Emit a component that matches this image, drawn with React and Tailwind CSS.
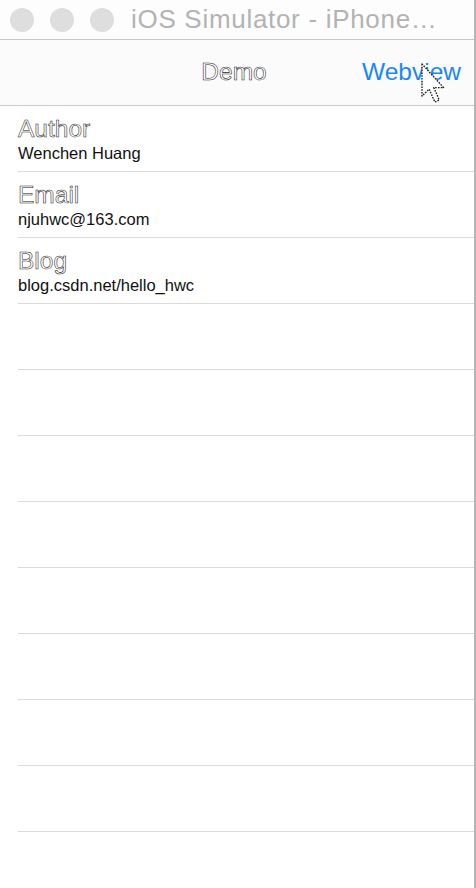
import React from "react";

const rows = [
  { t: "Author", s: "Wenchen Huang" },
  { t: "Email", s: "njuhwc@163.com" },
  { t: "Blog", s: "blog.csdn.net/hello_hwc" },
  {}, {}, {}, {}, {}, {}, {}, {}, {},
];

export default function App() {
  return (
    <div className="w-[476px] h-[888px] flex bg-white overflow-hidden" style={{ fontFamily: '"Liberation Sans", Arial, sans-serif' }}>
      <div className="w-[474px] h-full flex flex-col relative">
        {/* title bar */}
        <div className="h-[40px] shrink-0 flex items-center border-b border-[#c9c9c9] bg-[#fdfdfd]">
          <div className="flex gap-[16px] pl-[10px]">
            <div className="w-[24px] h-[24px] rounded-full bg-[#dedede]" />
            <div className="w-[24px] h-[24px] rounded-full bg-[#dedede]" />
            <div className="w-[24px] h-[24px] rounded-full bg-[#dedede]" />
          </div>
          <div className="ml-[17px] text-[26px] tracking-[0.7px] leading-none text-[#b3b3b3] whitespace-nowrap -mt-[1px]">iOS Simulator - iPhone…</div>
        </div>
        {/* nav bar */}
        <div className="h-[66px] shrink-0 relative flex items-center justify-center border-b border-[#c8c8c8] bg-[#fbfbfb]">
          <div className="text-[24.5px] leading-none text-white [-webkit-text-stroke:0.55px_#222] -mt-[1px] -ml-[6px]">Demo</div>
          <div className="absolute right-[13px] top-[20px] text-[24.5px] leading-none text-[#1a86fa]">Webview</div>
        </div>
        {/* table */}
        <div className="flex flex-col">
          {rows.map((r, i) => (
            <div key={i} className="pl-[18px] shrink-0">
              <div className="h-[66px] border-b border-[#dadada] pt-[9px]">
                {r.t && (
                  <>
                    <div className="text-[24.5px] leading-[28px] text-white [-webkit-text-stroke:0.55px_#222]">{r.t}</div>
                    <div className="text-[16.5px] leading-[20px] text-[#111]">{r.s}</div>
                  </>
                )}
              </div>
            </div>
          ))}
        </div>
        {/* cursor */}
        <svg className="absolute left-[420px] top-[62px]" width="28" height="44" viewBox="0 0 14 22">
          <path d="M1 1 L1 17 L4.6 13.6 L7.4 20 L9.6 19 L6.9 12.8 L11.8 12.8 Z" fill="#fff" stroke="#222" strokeWidth="0.7" strokeDasharray="0.8 0.6" strokeLinejoin="round" />
        </svg>
      </div>
      <div className="w-[2px] h-full bg-[#b5b5b5]" />
    </div>
  );
}
